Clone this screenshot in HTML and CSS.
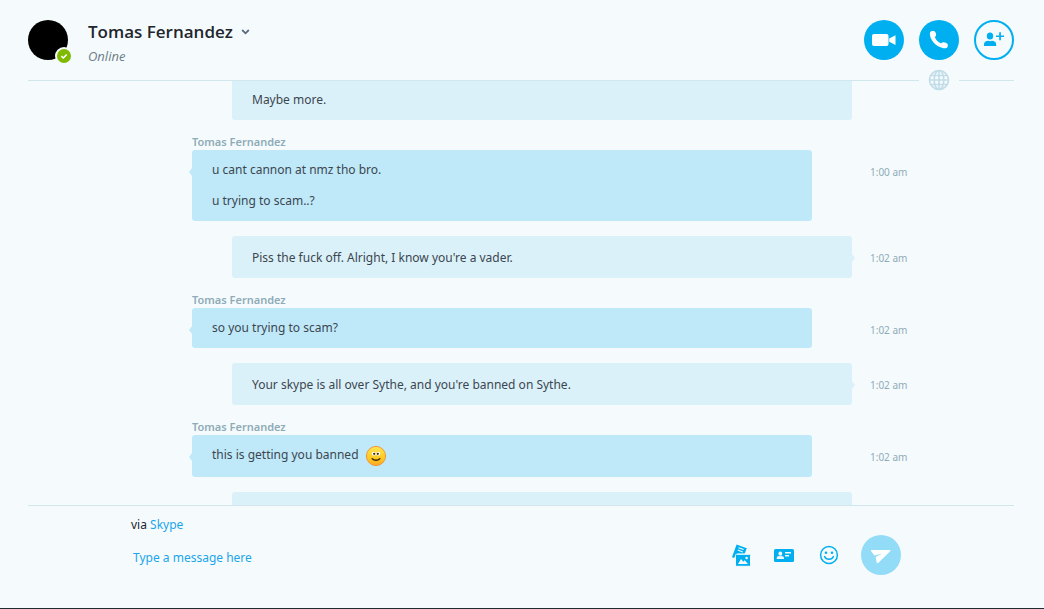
FILE: index.html
```html
<!DOCTYPE html>
<html lang="en">
<head>
<meta charset="utf-8">
<title>Tomas Fernandez</title>
<link rel="stylesheet" href="styles.css">
</head>
<body>
<div class="app">
  <header class="header">
    <div class="avatar">
      <svg class="status" viewBox="0 0 18 18" aria-hidden="true"><circle cx="9" cy="9" r="9" fill="#f5fbfd"/><circle cx="9" cy="9" r="7" fill="#7fba00"/><path d="M6.4 9.2l1.9 1.8 3.4-3.5" fill="none" stroke="#fff" stroke-width="1.6"/></svg>
    </div>
    <div class="contact">
      <button class="name" type="button">Tomas Fernandez
        <svg class="chevron" viewBox="0 0 9 6" aria-hidden="true"><path d="M1.2 1l3.3 3.3L7.800 1" fill="none" stroke="#596b7c" stroke-width="1.8"/></svg>
      </button>
      <p class="presence">Online</p>
    </div>
    <div class="actions">
      <button class="round" type="button" aria-label="Video call">
        <svg viewBox="0 0 40 40"><rect x="8" y="14" width="16.500" height="12" rx="2" fill="#fff"/><path d="M25.200 18.400l6.300-3.200v9.800l-6.300-3.200z" fill="#fff"/></svg>
      </button>
      <button class="round" type="button" aria-label="Call">
        <svg viewBox="0 0 40 40"><path d="M12.200 11.200c1.400-.6 3.300-.3 3.900.5.900 1.300 1.300 2.900.8 4-.4.900-1.100 1.200-.8 2.100.7 2.100 3.300 4.600 5.500 5.400 1 .3 1.500-.7 2.600-.9 1.600-.2 3.700.9 4.400 1.700.4.500.2 2.300-.2 3.200-.5 1-2.600 1.300-4.900.7-6.800-1.600-12.200-7.600-12.600-13.600-.1-1.400.3-2.600 1.300-3.100z" fill="#fff"/></svg>
      </button>
      <button class="round outline" type="button" aria-label="Add people">
        <svg viewBox="0 0 40 40"><circle cx="20" cy="20" r="19" fill="none" stroke="#00aff0" stroke-width="2"/><g fill="#00aff0"><ellipse cx="16" cy="16" rx="3.200" ry="3.600"/><path d="M10 26v-1.500c0-2.600 1.900-3.700 4.200-3.700.7.500 2.900.5 3.700 0 2.300 0 4.300 1.100 4.300 3.700V26z"/><path d="M25.200 12.200h1.700v3.200H30v1.700h-3.100v3.200h-1.700v-3.200H22v-1.700h3.200z"/></g></svg>
      </button>
    </div>
    <div class="globe">
      <svg viewBox="0 0 22 22" fill="none" stroke="#c2dde8" stroke-width="1.700" aria-hidden="true"><circle cx="11" cy="11" r="9.500"/><ellipse cx="11" cy="11" rx="4.800" ry="9.500"/><path d="M11 1.500v19M1.500 11h19M3 6.500h16M3 15.500h16"/></svg>
    </div>
  </header>

  <main class="log">
    <div class="list">
      <article class="message mine"><div class="bubble"><p>Maybe more.</p></div></article>
      <article class="message theirs">
        <h2 class="author">Tomas Fernandez</h2>
        <div class="bubble tail"><p>u cant cannon at nmz tho bro.</p><p>u trying to scam..?</p></div>
        <time class="time">1:00 am</time>
      </article>
      <article class="message mine">
        <div class="bubble tail"><p>Piss the fuck off. Alright, I know you're a vader.</p></div>
        <time class="time">1:02 am</time>
      </article>
      <article class="message theirs">
        <h2 class="author">Tomas Fernandez</h2>
        <div class="bubble tail"><p>so you trying to scam?</p></div>
        <time class="time">1:02 am</time>
      </article>
      <article class="message mine">
        <div class="bubble tail"><p>Your skype is all over Sythe, and you're banned on Sythe.</p></div>
        <time class="time">1:02 am</time>
      </article>
      <article class="message theirs">
        <h2 class="author">Tomas Fernandez</h2>
        <div class="bubble tail"><p class="with-emoji">this is getting you banned
          <svg class="emoji" viewBox="0 0 22 22" role="img" aria-label="Smile">
            <defs><linearGradient id="face" x1="0" y1="0" x2="0" y2="1"><stop offset="0" stop-color="#ffe650"/><stop offset=".65" stop-color="#ffc81e"/><stop offset="1" stop-color="#fba52a"/></linearGradient></defs>
            <circle cx="11" cy="11" r="9.600" fill="url(#face)" stroke="#f3963a" stroke-width="1"/>
            <ellipse cx="8.800" cy="8.700" rx="2.100" ry="1.900" fill="#fff"/><ellipse cx="13.200" cy="8.700" rx="2.100" ry="1.900" fill="#fff"/>
            <circle cx="9.200" cy="8.800" r="1.100" fill="#3b2508"/><circle cx="12.800" cy="8.800" r="1.100" fill="#3b2508"/>
            <path d="M7.200 13.700c2 1.900 5.600 1.900 7.600 0" fill="none" stroke="#3b2508" stroke-width="1.500" stroke-linecap="round"/>
          </svg></p></div>
        <time class="time">1:02 am</time>
      </article>
      <article class="message mine"><div class="bubble"></div></article>
    </div>
  </main>

  <footer class="footer">
    <form class="composer">
      <p class="via">via <a href="#">Skype</a></p>
      <div class="entry">
        <input class="input" type="text" placeholder="Type a message here" aria-label="Type a message here">
        <button class="tool" type="button" aria-label="Send files">
          <svg viewBox="0 0 24 24"><path d="M7.600 1.400l10.200 3.800-2.100 5.300H8.500L7 13.400l-1-.4-.7 2L3 14.200z" fill="#00aff0"/><path d="M9.600 4.700l5 1.900M8.800 7l5 1.900" stroke="#f5fbfd" stroke-width="1.100"/><rect x="6.500" y="11.300" width="15" height="12" rx="1" fill="#00aff0" stroke="#f5fbfd" stroke-width="1"/><path d="M9 21l3-5 2.300 2.800 1.400-1.500L19 21z" fill="#f5fbfd"/><circle cx="17.600" cy="15" r="1.200" fill="#f5fbfd"/></svg>
        </button>
        <button class="tool" type="button" aria-label="Send contacts">
          <svg viewBox="0 0 24 24"><rect x="1" y="6" width="20" height="13" rx="1.500" fill="#00aff0"/><g fill="#f5fbfd"><ellipse cx="7.300" cy="10.600" rx="1.900" ry="2.200"/><path d="M3.700 16v-.8c0-1.500 1.200-2.200 2.500-2.200.7.400 1.500.4 2.200 0 1.300 0 2.600.7 2.600 2.200v.8z"/><path d="M12 9h6v1.500h-6zM12 12h4v1.500h-4z"/></g></svg>
        </button>
        <button class="tool" type="button" aria-label="Emoticons">
          <svg viewBox="0 0 24 24"><circle cx="12" cy="12" r="8.400" fill="none" stroke="#00aff0" stroke-width="1.500"/><circle cx="9" cy="9.800" r="1.300" fill="#00aff0"/><circle cx="15" cy="9.800" r="1.300" fill="#00aff0"/><path d="M7.600 13.500c1.500 3.700 7.300 3.700 8.800 0" fill="none" stroke="#00aff0" stroke-width="1.500" stroke-linecap="round"/></svg>
        </button>
        <button class="send" type="submit" aria-label="Send message">
          <svg viewBox="0 0 40 40"><path d="M10.600 15h18c.8 0 1 .6.500 1.200L17.500 27.800c-.9.800-1.700.6-1.900-.5l-1-5.300 6.600-3.300-7.800 1.700-3.200-4.200c-.4-.6-.2-1.200.4-1.200z" fill="#fff"/></svg>
        </button>
      </div>
    </form>
  </footer>
</div>
</body>
</html>
```
FILE: styles.css
```css
* { box-sizing: border-box; }

body {
  margin: 0;
  background: #f5fbfd;
  color: #3c4650;
  font: 12px/20px "Noto Sans", "Open Sans", sans-serif;
}

p, h2 { margin: 0; }

button {
  border: 0;
  padding: 0;
  background: none;
  color: inherit;
  font: inherit;
  cursor: pointer;
}

svg { display: block; }

.app {
  display: flex;
  flex-direction: column;
  height: 100vh;
  border-bottom: 1px solid #1d2b33;
}

.header {
  position: relative;
  display: flex;
  flex: none;
  align-items: flex-start;
  margin: 0 30px 0 28px;
  padding: 20px 0;
  border-bottom: 1px solid #d2e6ee;
}

.avatar {
  position: relative;
  flex: none;
  width: 40px;
  height: 40px;
  border-radius: 50%;
  background: #000;
}

.status {
  position: absolute;
  right: -5px;
  bottom: -5px;
  width: 18px;
  height: 18px;
}

.contact {
  flex: 1;
  height: 40px;
  padding-left: 20px;
}

.name {
  display: flex;
  align-items: center;
  gap: 8px;
  color: #22262c;
  font-family: "Open Sans", "Noto Sans", sans-serif;
  font-size: 17px;
  font-weight: 600;
  line-height: 24px;
}

.chevron { width: 9px; height: 6px; }

.presence {
  color: #6f7b85;
  font-family: "Open Sans", "Noto Sans", sans-serif;
  font-size: 13px;
  font-style: italic;
  line-height: 24px;
}

.actions { display: flex; gap: 15px; }

.round {
  width: 40px;
  height: 40px;
  border-radius: 50%;
  background: #00aff0;
}

.outline { background: none; }

.globe {
  position: absolute;
  right: 55px;
  bottom: -11px;
  display: flex;
  justify-content: center;
  width: 40px;
  background: #f5fbfd;
}

.globe svg { width: 22px; height: 22px; }

.log {
  flex: 1;
  min-height: 0;
  overflow: hidden;
}

.list {
  display: flex;
  flex-direction: column;
  gap: 15px;
  margin-top: -3px;
}

.message {
  display: grid;
  grid-template-columns: 1fr minmax(0, 660px) 1fr;
}

.author {
  grid-column: 2;
  padding-bottom: 2px;
  color: #8fabb7;
  font-size: 11px;
  font-weight: 600;
  line-height: 13px;
}

.bubble {
  position: relative;
  display: grid;
  grid-column: 2;
  gap: 11px;
  border-radius: 3px;
}

.theirs .bubble {
  margin-right: 40px;
  padding: 10px 20px;
  background: #bfe9f9;
}

.mine .bubble {
  min-height: 42px;
  margin-left: 40px;
  padding: 12px 20px 10px;
  background: #dbf1f9;
}

.tail::before {
  content: "";
  position: absolute;
  top: 18px;
  border: solid transparent;
  border-width: 4px 0;
}

.theirs .tail::before {
  right: 100%;
  border-right: 3px solid #bfe9f9;
}

.mine .tail::before {
  left: 100%;
  border-left: 3px solid #dbf1f9;
}

.with-emoji {
  display: flex;
  gap: 6px;
  height: 22px;
}

.emoji { width: 22px; height: 22px; }

.time {
  grid-column: 3;
  padding: 12px 0 0 18px;
  color: #8fabb7;
  font-size: 10px;
}

.footer {
  flex: none;
  margin: 0 30px 0 28px;
  padding: 9px 0 33px;
  border-top: 1px solid #d2e6ee;
}

.composer {
  max-width: 770px;
  margin: 0 113px 0 103px;
}

.via { color: #22262c; }

a, .input::placeholder { color: #1ba5ea; opacity: 1; }

a { text-decoration: none; }

.entry { display: flex; align-items: center; }

.input {
  flex: 1;
  min-width: 0;
  height: 40px;
  padding: 4px 2px 0;
  border: 0;
  outline: 0;
  background: none;
  color: #22262c;
  font: inherit;
}

.tool {
  width: 24px;
  height: 24px;
  margin-right: 20px;
}

.send {
  width: 40px;
  height: 40px;
  border-radius: 50%;
  background: #93dcf8;
}
```
